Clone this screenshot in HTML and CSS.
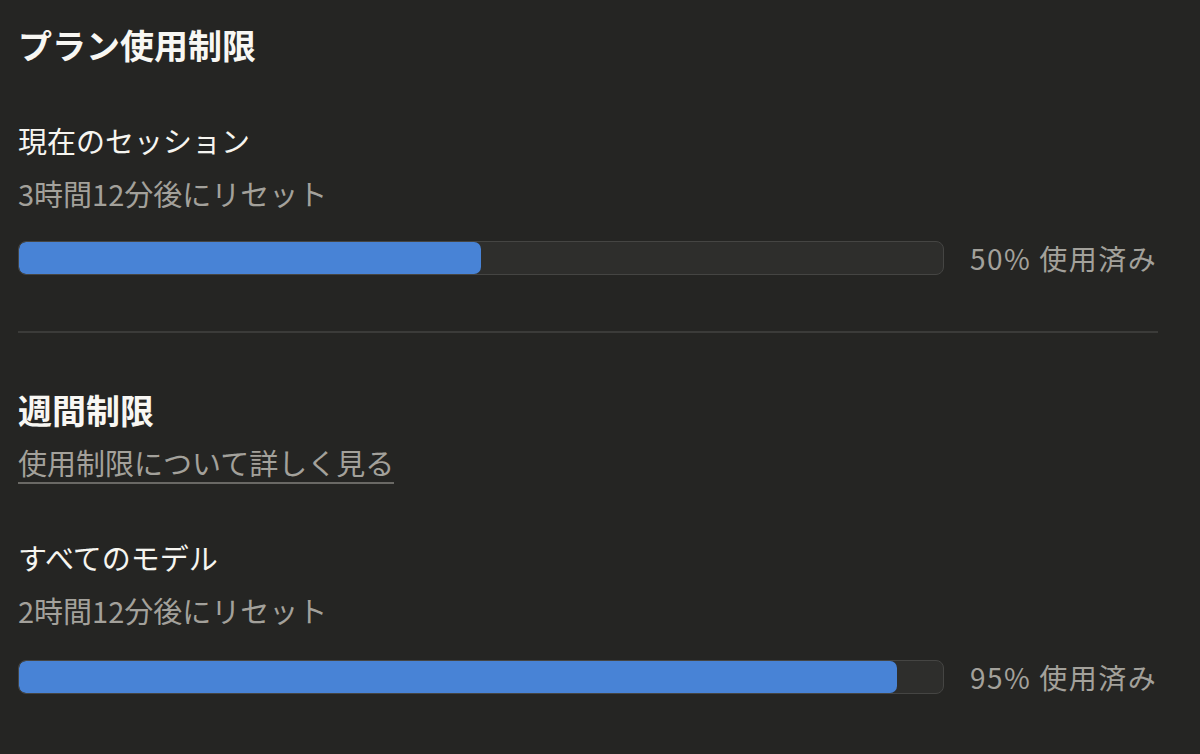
FILE: index.html
```html
<!DOCTYPE html>
<html lang="ja">
<head>
<meta charset="utf-8">
<link rel="stylesheet" href="styles.css">
</head>
<body>
<main class="page">
  <section class="section">
    <h1 class="title">プラン使用制限</h1>
    <div class="item item-first">
      <div class="label">現在のセッション</div>
      <div class="sub">3時間12分後にリセット</div>
      <div class="bar-row">
        <div class="track"><div class="fill" style="width: 50%"></div></div>
        <div class="pct">50% 使用済み</div>
      </div>
    </div>
  </section>
  <hr class="divider">
  <section class="section">
    <h2 class="title title-2">週間制限</h2>
    <a class="link" href="#">使用制限について詳しく見る</a>
    <div class="item item-second">
      <div class="label">すべてのモデル</div>
      <div class="sub">2時間12分後にリセット</div>
      <div class="bar-row bar-row-2">
        <div class="track"><div class="fill" style="width: 95%"></div></div>
        <div class="pct">95% 使用済み</div>
      </div>
    </div>
  </section>
</main>
</body>
</html>
```

FILE: styles.css
```css
html, body {
  margin: 0;
  padding: 0;
  background: #252523;
}
body {
  font-family: "Noto Sans CJK JP", "Noto Sans", sans-serif;
  color: #f6f5f0;
  height: 754px;
  overflow: hidden;
}
.page {
  width: 1140px;
  padding: 21px 0 0 18px;
}
.section {
  display: flex;
  flex-direction: column;
  align-items: flex-start;
}
.title {
  margin: 0;
  font-size: 34px;
  line-height: 48px;
  font-weight: 700;
  color: #f8f7f3;
}
.item {
  display: flex;
  flex-direction: column;
  width: 100%;
}
.item-first { margin-top: 51px; }
.item-second { margin-top: 53px; }
.label {
  font-size: 29px;
  line-height: 40px;
  color: #f6f5f0;
}
.sub {
  margin-top: 13px;
  font-size: 29px;
  line-height: 40px;
  color: #a3a19b;
}
.bar-row {
  margin-top: 28px;
  display: flex;
  align-items: center;
  width: 100%;
}
.bar-row-2 {
  margin-top: 30px;
}
.track {
  flex: 1;
  height: 34px;
  box-sizing: border-box;
  border: 1.5px solid #454543;
  border-radius: 8px;
  background: #2e2e2c;
  overflow: hidden;
}
.fill {
  height: 100%;
  background: #4883d6;
  border-radius: 7px;
}
.pct {
  flex: 0 0 188px;
  min-width: 0;
  margin-left: 26px;
  font-size: 28px;
  line-height: 34px;
  letter-spacing: 1.5px;
  color: #a3a19b;
  white-space: nowrap;
}
.divider {
  margin: 56px 0 0 0;
  width: 1140px;
  height: 2px;
  border: 0;
  background: #3b3b39;
}
.title-2 {
  margin-top: 53px;
}
.link {
  margin-top: 8px;
  font-size: 29px;
  line-height: 40px;
  color: #a3a19b;
  text-decoration: none;
  border-bottom: 2px solid #6a6965;
}
```
